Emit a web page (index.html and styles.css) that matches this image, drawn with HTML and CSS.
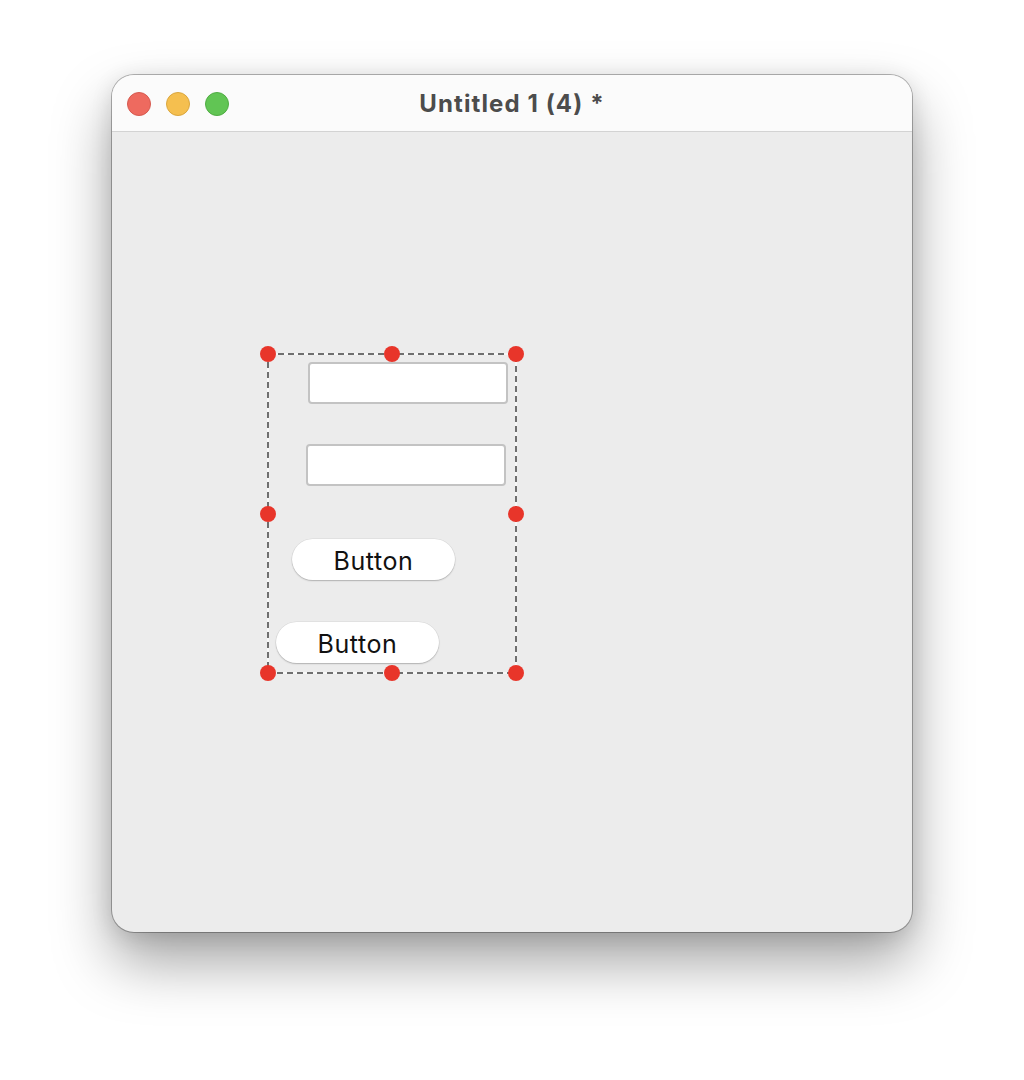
FILE: index.html
```html
<!DOCTYPE html>
<html>
<head>
<meta charset="utf-8">
<link rel="stylesheet" href="styles.css">
</head>
<body>
<div class="window">
  <div class="titlebar">
    <div class="lights">
      <span class="light red"></span>
      <span class="light yellow"></span>
      <span class="light green"></span>
    </div>
    <div class="title">Untitled 1 (4) *</div>
  </div>
  <div class="canvas">
    <svg class="selection" width="252" height="323" viewBox="0 0 252 323">
      <rect x="2" y="2" width="248" height="319" fill="none" stroke="#f7f7f7" stroke-width="2"/>
      <rect x="2" y="2" width="248" height="319" fill="none" stroke="#6f6f6f" stroke-width="2" stroke-dasharray="6 4"/>
    </svg>
    <div class="field f1"></div>
    <div class="field f2"></div>
    <div class="btn b1">Button</div>
    <div class="btn b2">Button</div>
    <span class="handle h-tl"></span>
    <span class="handle h-tm"></span>
    <span class="handle h-tr"></span>
    <span class="handle h-ml"></span>
    <span class="handle h-mr"></span>
    <span class="handle h-bl"></span>
    <span class="handle h-bm"></span>
    <span class="handle h-br"></span>
  </div>
</div>
</body>
</html>
```

FILE: styles.css
```css
html, body {
  margin: 0;
  padding: 0;
  background: #ffffff;
}
body {
  width: 1024px;
  height: 1080px;
  overflow: hidden;
  padding: 75px 0 0 112px;
  box-sizing: border-box;
  font-family: Inter, "Liberation Sans", sans-serif;
}
.window {
  width: 800px;
  height: 857px;
  border-radius: 22px;
  overflow: hidden;
  display: flex;
  flex-direction: column;
  background: #ececec;
  box-shadow: 0 0 0 1px rgba(0,0,0,0.28), 0 30px 58px rgba(0,0,0,0.36), 0 4px 22px rgba(0,0,0,0.12);
}
.titlebar {
  position: relative;
  height: 56px;
  flex: none;
  background: #fbfbfb;
  border-bottom: 1px solid #d3d3d3;
  display: flex;
  align-items: center;
  justify-content: center;
}
.lights {
  position: absolute;
  left: 15px;
  top: 17px;
  display: flex;
  gap: 15px;
}
.light {
  width: 24px;
  height: 24px;
  border-radius: 50%;
  box-sizing: border-box;
}
.red { background: #ee6a5f; border: 1px solid #d55a50; }
.yellow { background: #f5bf4f; border: 1px solid #d9a63e; }
.green { background: #61c554; border: 1px solid #50ac44; }
.title {
  font-weight: 700;
  font-size: 24px;
  letter-spacing: 1.1px;
  color: #4c4c4c;
  margin-top: 1px;
}
.canvas {
  position: relative;
  flex: 1;
}
.selection {
  position: absolute;
  left: 154px;
  top: 220px;
}
.field {
  position: absolute;
  width: 200px;
  height: 42px;
  box-sizing: border-box;
  background: #ffffff;
  border: 2px solid #c3c3c3;
  border-radius: 4px;
}
.f1 { left: 196px; top: 230px; }
.f2 { left: 194px; top: 312px; }
.btn {
  position: absolute;
  width: 163px;
  height: 41px;
  box-sizing: border-box;
  padding-top: 3px;
  background: #ffffff;
  border-radius: 21px;
  box-shadow: 0 1px 1.5px rgba(0,0,0,0.22), 0 0 0 0.5px rgba(0,0,0,0.08);
  display: flex;
  align-items: center;
  justify-content: center;
  font-size: 25px;
  letter-spacing: 0.6px;
  color: #111;
}
.b1 { left: 180px; top: 407px; }
.b2 { left: 164px; top: 490px; }
.handle {
  position: absolute;
  width: 16px;
  height: 16px;
  margin: -8px 0 0 -8px;
  border-radius: 50%;
  background: #e8352a;
}
.h-tl { left: 156px; top: 222px; }
.h-tm { left: 280px; top: 222px; }
.h-tr { left: 404px; top: 222px; }
.h-ml { left: 156px; top: 382px; }
.h-mr { left: 404px; top: 382px; }
.h-bl { left: 156px; top: 541px; }
.h-bm { left: 280px; top: 541px; }
.h-br { left: 404px; top: 541px; }
```
